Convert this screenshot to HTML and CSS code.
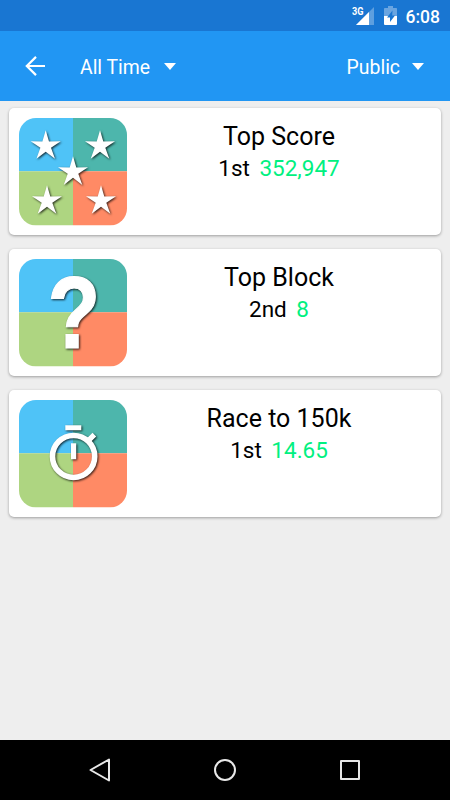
FILE: index.html
```html
<!DOCTYPE html>
<html lang="en">
<head>
<meta charset="utf-8">
<title>Leaderboards</title>
<link rel="stylesheet" href="styles.css">
</head>
<body>
<svg class="defs" width="0" height="0" aria-hidden="true">
  <defs>
    <symbol id="tiles" viewBox="0 0 108 108">
      <path fill="#4fc3f7" d="M0 53.500V17A17 17 0 0 1 17 0h37v53.500z"/>
      <path fill="#4db6ac" d="M54 0h37a17 17 0 0 1 17 17v36.500H54z"/>
      <path fill="#aed581" d="M0 53.500h54V108H17A17 17 0 0 1 0 91z"/>
      <path fill="#ff8a65" d="M54 53.500h54V91a17 17 0 0 1-17 17H54z"/>
    </symbol>
    <path id="star" d="M0-16L3.300-4.600 15-4.900 5.300 1.700 9.300 12.800 0 5.600-9.300 12.800-5.300 1.700-15-4.900-3.300-4.600z"/>
  </defs>
</svg>
<div class="screen">
  <div class="status">
    <svg class="signal" width="24" height="20" viewBox="0 0 24 20">
      <path fill="#fff" opacity=".3" d="M22 1v18H4z"/>
      <path fill="#fff" d="M17 6v13H4z"/>
      <rect x="0" y="0" width="13" height="10" fill="#1976d2"/>
      <text x="0" y="9" class="net" textLength="11.500" lengthAdjust="spacingAndGlyphs">3G</text>
    </svg>
    <svg class="battery" width="13" height="19" viewBox="0 0 13 19">
      <path fill="#fff" opacity=".35" d="M4 0h5v2h3.200q.8 0 .8.8V10H0V2.800q0-.8.8-.8H4z"/>
      <path fill="#fff" d="M0 10h13v8q0 1-1 1H1q-1 0-1-1z"/>
      <path fill="#1976d2" d="M8.500 4.500L3 11.500h3V16l5-6.500H8.200z"/>
    </svg>
    <span class="clock">6:08</span>
  </div>
  <header class="bar">
    <svg class="back" width="20" height="20" viewBox="0 0 20 20"><path fill="none" stroke="#fff" stroke-width="2.200" d="M20 10H1.800M11 .9L1.800 10l9.200 9.100"/></svg>
    <span class="pick">All Time</span>
    <svg class="caret first" width="12" height="7" viewBox="0 0 12 7"><path fill="#fff" d="M0 0h12L6 7z"/></svg>
    <span class="pick right">Public</span>
    <svg class="caret" width="12" height="7" viewBox="0 0 12 7"><path fill="#fff" d="M0 0h12L6 7z"/></svg>
  </header>
  <main class="list">
    <section class="card">
      <svg class="icon" viewBox="0 0 108 108" preserveAspectRatio="none">
        <use href="#tiles" width="108" height="108"/>
        <g class="mark">
          <use href="#star" x="26.700" y="28.200"/><use href="#star" x="81" y="28.200"/>
          <use href="#star" x="54" y="54.400"/>
          <use href="#star" x="28" y="83.500"/><use href="#star" x="82" y="83.500"/>
        </g>
      </svg>
      <div class="info"><h2>Top Score</h2><p>1st <b>352,947</b></p></div>
    </section>
    <section class="card">
      <svg class="icon" viewBox="0 0 108 108" preserveAspectRatio="none">
        <use href="#tiles" width="108" height="108"/>
        <g class="mark"><text class="question" transform="translate(54.800 89.100) scale(.84 1)" text-anchor="middle">?</text></g>
      </svg>
      <div class="info"><h2>Top Block</h2><p>2nd <b>8</b></p></div>
    </section>
    <section class="card">
      <svg class="icon" viewBox="0 0 108 108" preserveAspectRatio="none">
        <use href="#tiles" width="108" height="108"/>
        <g class="mark">
          <circle cx="54.600" cy="56.700" r="21.100" fill="none" stroke="#fff" stroke-width="5.600"/>
          <path d="M46.300 25.300h16v5.200h-16zM52 43.500h5.200v16H52zM68 38.500l5.500-5.500 3.700 3.700-5.500 5.500z"/>
        </g>
      </svg>
      <div class="info"><h2>Race to 150k</h2><p>1st <b>14.65</b></p></div>
    </section>
  </main>
  <nav class="nav">
    <svg width="22" height="24" viewBox="0 0 22 24"><path d="M20 1.500v21L1.500 12z"/></svg>
    <svg width="22" height="24" viewBox="0 0 22 24"><circle cx="11" cy="12" r="10"/></svg>
    <svg width="22" height="24" viewBox="0 0 22 24"><rect x="2" y="3" width="18" height="18"/></svg>
  </nav>
</div>
</body>
</html>
```
FILE: styles.css
```css
body {
  margin: 0;
  font-family: Roboto, sans-serif;
  color: #000;
}
.defs {
  display: block;
}
.screen {
  display: flex;
  flex-direction: column;
  width: 450px;
  height: 800px;
  background: #eee;
  overflow: hidden;
}
.status {
  display: flex;
  align-items: center;
  justify-content: flex-end;
  box-sizing: border-box;
  height: 31px;
  padding-right: 10px;
  background: #1976d2;
}
.signal {
  margin-right: 8px;
}
.net {
  font-size: 10px;
  font-weight: 700;
  fill: #fff;
}
.battery {
  margin-right: 9px;
}
.clock {
  padding-top: 2px;
  font-size: 17.500px;
  font-weight: 500;
  color: #fff;
}
.bar {
  display: flex;
  align-items: center;
  box-sizing: border-box;
  height: 70px;
  padding: 0 26px 0 25px;
  background: #2196f3;
}
.back {
  margin-right: 35px;
}
.pick {
  padding-top: 3px;
  font-size: 19.400px;
  line-height: 24px;
  color: #fff;
}
.right {
  margin-left: auto;
}
.caret {
  margin-left: 12px;
}
.first {
  margin-left: 14px;
}
.list {
  display: flex;
  flex: 1;
  flex-direction: column;
  gap: 14px;
  padding: 7px 9px 0;
}
.card {
  display: flex;
  align-items: flex-start;
  box-sizing: border-box;
  height: 127px;
  padding: 10px;
  background: #fff;
  border-radius: 5px;
  box-shadow: 0 1px 3px rgba(0, 0, 0, .35);
}
.icon {
  width: 108px;
  height: 107.500px;
  overflow: visible;
}
.mark {
  fill: #fff;
  filter: drop-shadow(1.500px 1.500px 1.200px rgba(0, 0, 0, .8));
}
.question {
  font-family: "Liberation Sans", sans-serif;
  font-size: 103px;
  font-weight: 700;
  stroke: #fff;
  stroke-width: 1.200px;
}
.info {
  flex: 1;
  padding-top: 3px;
  text-align: center;
}
.info h2 {
  margin: 0;
  font-size: 25px;
  font-weight: 400;
  line-height: 32px;
}
.info p {
  margin: 0;
  font-size: 22.500px;
  line-height: 31px;
}
.info b {
  margin-left: 4px;
  font-weight: 400;
  color: #00f080;
}
.nav {
  display: flex;
  align-items: center;
  justify-content: space-between;
  box-sizing: border-box;
  height: 60px;
  padding: 0 89px;
  background: #000;
}
.nav svg {
  fill: none;
  stroke: #e8e8e8;
  stroke-width: 2;
  stroke-linejoin: round;
}
```
